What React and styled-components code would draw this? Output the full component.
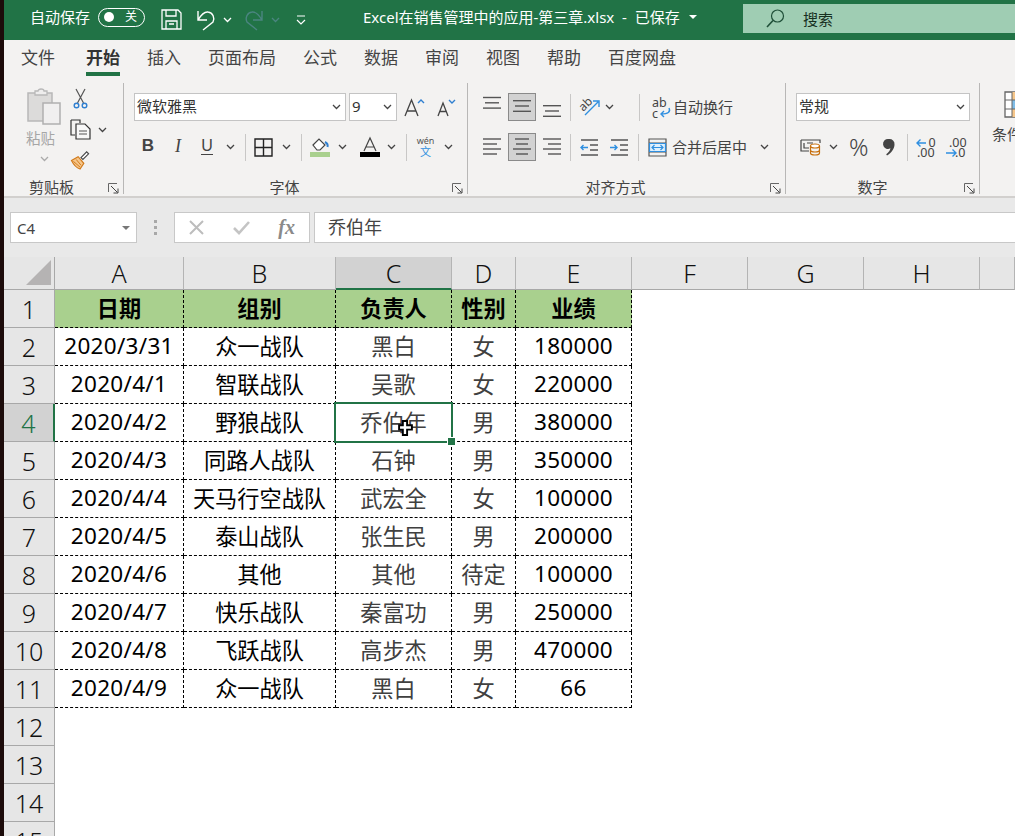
import React from "react";
import styled, { createGlobalStyle } from "styled-components";

const SANS = `"Noto Sans", "Noto Sans CJK SC", sans-serif`;

const GlobalStyle = createGlobalStyle`
  html, body {
    margin: 0;
    padding: 0;
    height: 836px;
    overflow: hidden;
    background: #ffffff;
  }
  * { box-sizing: border-box; }
  svg { display: block; overflow: visible; }
`;

const rows = [
  ["2020/3/31", "众一战队", "黑白", "女", "180000"],
  ["2020/4/1", "智联战队", "吴歌", "女", "220000"],
  ["2020/4/2", "野狼战队", "乔伯年", "男", "380000"],
  ["2020/4/3", "同路人战队", "石钟", "男", "350000"],
  ["2020/4/4", "天马行空战队", "武宏全", "女", "100000"],
  ["2020/4/5", "泰山战队", "张生民", "男", "200000"],
  ["2020/4/6", "其他", "其他", "待定", "100000"],
  ["2020/4/7", "快乐战队", "秦富功", "男", "250000"],
  ["2020/4/8", "飞跃战队", "高步杰", "男", "470000"],
  ["2020/4/9", "众一战队", "黑白", "女", "66"],
];
const tabs = ["文件", "开始", "插入", "页面布局", "公式", "数据", "审阅", "视图", "帮助", "百度网盘"];
const columns = ["A", "B", "C", "D", "E", "F", "G", "H", ""];

const Chevron = ({ color = "#444" }) => (
  <svg width="9" height="6" viewBox="0 0 9 6" fill="none" stroke={color} strokeWidth="1.3">
    <path d="M1 1l3.5 3.5L8 1" />
  </svg>
);

const Launcher = () => (
  <svg width="11" height="11" viewBox="0 0 11 11" fill="none" stroke="#666" strokeWidth="1">
    <path d="M.5 9V.5H9" />
    <path d="M3 3l6.5 6.5M10 5.5V10H5.5" stroke="#444" />
  </svg>
);

const SaveIcon = () => (
  <svg width="21" height="21" viewBox="0 0 21 21" fill="none" stroke="#fff" strokeWidth="1.3">
    <path d="M1 1h16l3 3v16H1z" />
    <path d="M5 1v6h10V1M5 20v-8h11v8M8 15h5" />
  </svg>
);

const UndoIcon = () => (
  <svg width="20" height="20" viewBox="0 0 20 20" fill="none" stroke="#fff" strokeWidth="1.4">
    <path d="M1 1v9h9M1 10C4 5 7 1.500 11 2c5 .5 7 6 5 10L6 20" />
  </svg>
);

const RedoIcon = () => (
  <svg width="20" height="20" viewBox="0 0 20 20" fill="none" stroke="#4b8580" strokeWidth="1.4">
    <path d="M19 1v9h-9M19 10C16 5 13 1.500 9 2c-5 .5-7 6-5 10l10 8" />
  </svg>
);

const CustomizeIcon = () => (
  <svg width="10" height="10" viewBox="0 0 10 10" fill="none" stroke="#fff" strokeWidth="1.2">
    <path d="M1 1h8M1 5l4 4 4-4" />
  </svg>
);

const SearchIcon = () => (
  <svg width="19" height="19" viewBox="0 0 19 19" fill="none" stroke="#1f4f38" strokeWidth="1.2">
    <circle cx="11.5" cy="7" r="6" />
    <path d="M7 11.5L1 18" strokeWidth="1.6" />
  </svg>
);

const PasteIcon = () => (
  <svg width="36" height="38" viewBox="0 0 36 38" fill="none">
    <path d="M2 5h24v28H2z" fill="#dcdbda" stroke="#b8b8b8" strokeWidth="1.5" />
    <path d="M9 6V3h3a3 2 0 016 0h3v4H9z" fill="#eeeded" stroke="#b8b8b8" strokeWidth="1.3" />
    <path d="M17 15h17v21H17z" fill="#f0efef" stroke="#b0b0b0" strokeWidth="1.5" />
  </svg>
);

const CutIcon = () => (
  <svg width="15" height="21" viewBox="0 0 15 21" fill="none">
    <path d="M3 1l7.5 14M12 1L4.500 15" stroke="#555" strokeWidth="1.2" />
    <circle cx="3.5" cy="17.5" r="2.3" stroke="#2f7fd0" strokeWidth="1.4" />
    <circle cx="11.5" cy="17.5" r="2.3" stroke="#2f7fd0" strokeWidth="1.4" />
  </svg>
);

const CopyIcon = () => (
  <svg width="21" height="21" viewBox="0 0 21 21" fill="none" stroke="#333" strokeWidth="1.2">
    <path d="M1 1h9v3M5 16H1V1" />
    <path d="M6 5h9l5 5v10H6z" fill="#f8f8f8" />
    <path d="M9 12h8M9 15h8" stroke="#555" />
  </svg>
);

const BrushIcon = () => (
  <svg width="21" height="19" viewBox="0 0 21 20" fill="none">
    <path d="M1 11l7-4 6 7-4 6c-3-1-7-5-9-9z" fill="#f6c68a" stroke="#d0791a" strokeWidth="1.2" />
    <path d="M3 12l7 6M6 10l5 6" stroke="#d0791a" />
    <path d="M11 8l6-6 2 2-6 6z" fill="#fff" stroke="#444" strokeWidth="1.2" />
  </svg>
);

const BorderIcon = () => (
  <svg width="19" height="19" viewBox="0 0 19 19" fill="none" stroke="#222" strokeWidth="1.4">
    <path d="M1 1h17v17H1zM9.5 1v17M1 9.5h17" />
  </svg>
);

const FillIcon = () => (
  <svg width="20" height="20" viewBox="0 0 20 20" fill="none">
    <path d="M3 8l6-6 6 6-5 5H7z" fill="#fff" stroke="#444" strokeWidth="1.2" />
    <path d="M15 5c2 1 3 3 2.500 5" stroke="#2f7fd0" strokeWidth="2" />
    <path d="M0 15h20v5H0z" fill="#a9d08e" />
  </svg>
);

const FontColorIcon = () => (
  <svg width="20" height="20" viewBox="0 0 20 20" fill="none">
    <path d="M4 14L10 1l6 13M6 10h8" stroke="#444" strokeWidth="1.2" />
    <path d="M0 15h20v5H0z" fill="#000" />
  </svg>
);

const SizeIcon = ({ up, big }) => (
  <svg width="21" height="19" viewBox="0 0 21 19" fill="none">
    <path d={big ? "M1 18L7.500 2 14 18M3.500 13h8" : "M3 18L8 5l5 13M5 13.500h6"} stroke="#444" strokeWidth="1.3" />
    <path d={up ? "M14 5l3-3 3 3" : "M14 2l3 3 3-3"} stroke="#2f7fd0" strokeWidth="1.4" />
  </svg>
);

const AlignIcon = ({ lines, gap = 5, top = 3 }) => (
  <svg width="18" height="22" viewBox="0 0 18 22" fill="none" stroke="#555" strokeWidth="1.4">
    {lines.map(([x1, x2], i) => (
      <path key={i} d={`M${x1} ${top + i * gap}H${x2}`} />
    ))}
  </svg>
);

const OrientIcon = () => (
  <svg width="22" height="20" viewBox="0 0 22 20" fill="none">
    <path d="M6 18L19 5M14 4h6v6" stroke="#2f8fe0" strokeWidth="1.4" />
    <text x="0" y="11" fontSize="12" fill="#444" transform="rotate(-45 7 8)" fontFamily="Noto Sans">ab</text>
  </svg>
);

const IndentIcon = ({ right }) => (
  <svg width="18" height="19" viewBox="0 0 18 19" fill="none" stroke="#555" strokeWidth="1.4">
    <path d="M1 2h17M10 7h8M10 12h8M1 17h17" />
    <path d={right ? "M0 9.500h7M4.500 7L7 9.500 4.500 12" : "M8 9.500H1M3.500 7L1 9.500 3.500 12"} stroke="#2f8fe0" />
  </svg>
);

const WrapIcon = () => (
  <svg width="19" height="21" viewBox="0 0 19 21" fill="none">
    <text x="0" y="10" fontSize="12.500" fill="#444" fontFamily="Noto Sans">ab</text>
    <text x="0" y="21" fontSize="12.500" fill="#444" fontFamily="Noto Sans">c</text>
    <path d="M17 11c2 4-1 6-8 6M12 14l-3 3 3 3" stroke="#2f8fe0" strokeWidth="1.4" />
  </svg>
);

const MergeIcon = () => (
  <svg width="19" height="19" viewBox="0 0 19 19" fill="none">
    <path d="M1 1h17v17H1zM1 5h17M1 14h17" stroke="#555" strokeWidth="1.2" />
    <path d="M1.500 5.500h16v8h-16z" fill="#dff0fc" stroke="#2f8fe0" strokeWidth="1.200" />
    <path d="M4 9.500h11M6.500 7L4 9.500 6.500 12M12.500 7L15 9.500 12.500 12" stroke="#2f8fe0" strokeWidth="1.200" />
  </svg>
);

const AccountingIcon = () => (
  <svg width="21" height="17" viewBox="0 0 21 17" fill="none">
    <path d="M1 1h19v3M1 1v11h8" stroke="#444" strokeWidth="1.200" />
    <path d="M4 4v5h5M7 4h6" stroke="#444" strokeWidth="1.200" />
    <ellipse cx="15" cy="7" rx="4.500" ry="2" fill="#fff" stroke="#c8710f" strokeWidth="1.200" />
    <path d="M10.500 7v7c0 1 2 2 4.500 2s4.500-1 4.500-2V7M10.500 11c0 1 2 2 4.500 2s4.500-1 4.500-2" stroke="#c8710f" strokeWidth="1.200" />
  </svg>
);

const CommaIcon = () => (
  <svg width="11" height="17" viewBox="0 0 11 17" fill="#444">
    <path d="M5 0a5 5 0 015.500 5.500c0 4-3 8.500-7.500 11l-.8-1.200c2.600-2 4-4 4.200-6a5 5 0 11-1.400-9.300z" />
  </svg>
);

const DecimalIcon = ({ more }) => (
  <svg width="20" height="21" viewBox="0 0 20 21" fill="none">
    {more ? (
      <>
        <text x="12.500" y="10" fontSize="12.500" fill="#444" fontFamily="Noto Sans">0</text>
        <text x="1" y="20" fontSize="12.500" fill="#444" fontFamily="Noto Sans">.00</text>
        <path d="M10 6H1M4.500 2.500L1 6l3.500 3.500" stroke="#2f8fe0" strokeWidth="1.400" />
      </>
    ) : (
      <>
        <text x="3" y="10" fontSize="12.500" fill="#444" fontFamily="Noto Sans">.00</text>
        <text x="9" y="20" fontSize="12.500" fill="#444" fontFamily="Noto Sans">.0</text>
        <path d="M0 16h10M6.500 12.500L10 16l-3.500 3.500" stroke="#2f8fe0" strokeWidth="1.400" />
      </>
    )}
  </svg>
);

const CondIcon = () => (
  <svg width="36" height="27" viewBox="0 0 36 27" fill="none">
    <path d="M1 1h35v25H1z" fill="#fff" stroke="#666" strokeWidth="1.300" />
    <path d="M8 1h28v8H8zM8 18h28v8H8z" fill="#f6c68a" />
    <path d="M8 9h28v9H8z" fill="#7fbde8" />
    <path d="M8 1v25M1 9h35M1 18h35" stroke="#666" />
  </svg>
);

const CloseMark = () => (
  <svg width="15" height="15" viewBox="0 0 15 15" fill="none" stroke="#bdbdbd" strokeWidth="2">
    <path d="M1 1l13 13M14 1L1 14" />
  </svg>
);

const CheckMark = () => (
  <svg width="17" height="14" viewBox="0 0 17 14" fill="none" stroke="#c4c4c4" strokeWidth="2.600">
    <path d="M1 7l5 5L16 1" />
  </svg>
);

const CrossCursor = () => (
  <svg width="15" height="16" viewBox="0 0 14 15">
    <path d="M4.500 1h4v4h4.500v4h-4.500v5h-4V9H1V5h3.500z" fill="#fff" stroke="#000" strokeWidth="1.800" />
  </svg>
);

export default function App() {
  return (
    <>
      <GlobalStyle />
      <Desktop>
        <DesktopEdge />
        <Window>
          <TitleBar>
            <AutoSaveLabel>自动保存</AutoSaveLabel>
            <Toggle>
              <ToggleKnob />
              <ToggleText>关</ToggleText>
            </Toggle>
            <QuickTool $w={21} $ml={16}><SaveIcon /></QuickTool>
            <QuickTool $w={20} $ml={15}><UndoIcon /></QuickTool>
            <QuickTool $w={9} $ml={6}><Chevron color="#fff" /></QuickTool>
            <QuickTool $w={20} $ml={11}><RedoIcon /></QuickTool>
            <QuickTool $w={9} $ml={8}><Chevron color="#4b8580" /></QuickTool>
            <QuickTool $w={10} $ml={16}><CustomizeIcon /></QuickTool>
            <DocTitle>
              Excel在销售管理中的应用-第三章.xlsx&nbsp; - &nbsp;已保存
              <DocCaret />
            </DocTitle>
            <SearchBox>
              <SearchIcon />
              <SearchText>搜索</SearchText>
            </SearchBox>
          </TitleBar>

          <TabBar>
            {tabs.map((t) => (
              <Tab key={t} $active={t === "开始"} $first={t === "文件"}>{t}</Tab>
            ))}
          </TabBar>

          <Ribbon>
            <Group $w={120}>
              <ClipboardBody>
                <PasteColumn>
                  <PasteIcon />
                  <PasteLabel>粘贴</PasteLabel>
                  <Chevron color="#aaa" />
                </PasteColumn>
                <ClipboardTools>
                  <CutSlot><CutIcon /></CutSlot>
                  <CopyRow>
                    <CopyIcon />
                    <Chevron />
                  </CopyRow>
                  <BrushIcon />
                </ClipboardTools>
              </ClipboardBody>
              <GroupLabel $shift={-24}>剪贴板</GroupLabel>
              <LauncherSlot><Launcher /></LauncherSlot>
            </Group>

            <Group $w={344}>
              <ToolRows $left={10}>
                <ToolRow>
                  <Select $w={212}>
                    <SelectText>微软雅黑</SelectText>
                    <Chevron />
                  </Select>
                  <Select $w={48} $ml={3}>
                    <SelectText>9</SelectText>
                    <Chevron />
                  </Select>
                  <Tool $w={21} $ml={7}><SizeIcon up big /></Tool>
                  <Tool $w={21} $ml={10}><SizeIcon /></Tool>
                </ToolRow>
                <ToolRow>
                  <Tool $w={28}><BoldGlyph>B</BoldGlyph></Tool>
                  <Tool $w={28} $ml={2}><ItalicGlyph>I</ItalicGlyph></Tool>
                  <Tool $w={28} $ml={1}><UnderGlyph>U</UnderGlyph></Tool>
                  <Tool $w={12} $ml={3}><Chevron /></Tool>
                  <Divider $ml={9} />
                  <Tool $w={19} $ml={8}><BorderIcon /></Tool>
                  <Tool $w={12} $ml={7}><Chevron /></Tool>
                  <Divider $ml={9} />
                  <Tool $w={20} $ml={8}><FillIcon /></Tool>
                  <Tool $w={12} $ml={6}><Chevron /></Tool>
                  <Tool $w={20} $ml={12}><FontColorIcon /></Tool>
                  <Tool $w={12} $ml={5}><Chevron /></Tool>
                  <Divider $ml={9} />
                  <WenTool $ml={9}>
                    <WenTop>wén</WenTop>
                    <WenBottom>文</WenBottom>
                  </WenTool>
                  <Tool $w={12} $ml={7}><Chevron /></Tool>
                </ToolRow>
              </ToolRows>
              <GroupLabel $shift={-22}>字体</GroupLabel>
              <LauncherSlot><Launcher /></LauncherSlot>
            </Group>

            <Group $w={318}>
              <ToolRows $left={15}>
                <ToolRow>
                  <Tool $w={18}><AlignIcon lines={[[0, 18], [2, 16], [0, 18]]} gap={5.300} top={1.500} /></Tool>
                  <ActiveTool $ml={7}><AlignIcon lines={[[0, 18], [2, 16], [0, 18]]} gap={5.300} top={4.700} /></ActiveTool>
                  <Tool $w={18} $ml={7}><AlignIcon lines={[[0, 18], [2, 16], [0, 18]]} gap={5.300} top={9.700} /></Tool>
                  <Divider $ml={9} />
                  <Tool $w={22} $ml={8}><OrientIcon /></Tool>
                  <Tool $w={12} $ml={2}><Chevron /></Tool>
                  <Divider $ml={24} />
                  <Tool $w={19} $ml={12}><WrapIcon /></Tool>
                  <WideLabel $ml={2}>自动换行</WideLabel>
                </ToolRow>
                <ToolRow>
                  <Tool $w={18}><AlignIcon lines={[[0, 18], [0, 14], [0, 18], [0, 14]]} /></Tool>
                  <ActiveTool $ml={7}><AlignIcon lines={[[2, 16], [3, 15], [0, 18], [3, 15]]} /></ActiveTool>
                  <Tool $w={18} $ml={7}><AlignIcon lines={[[0, 18], [5, 18], [0, 18], [5, 18]]} /></Tool>
                  <Divider $ml={9} />
                  <Tool $w={18} $ml={9}><IndentIcon /></Tool>
                  <Tool $w={18} $ml={12}><IndentIcon right /></Tool>
                  <Divider $ml={10} />
                  <Tool $w={19} $ml={9}><MergeIcon /></Tool>
                  <WideLabel $ml={5}>合并后居中</WideLabel>
                  <Tool $w={12} $ml={11}><Chevron /></Tool>
                </ToolRow>
              </ToolRows>
              <GroupLabel $shift={-22}>对齐方式</GroupLabel>
              <LauncherSlot><Launcher /></LauncherSlot>
            </Group>

            <Group $w={194}>
              <ToolRows $left={10}>
                <ToolRow>
                  <Select $w={174}>
                    <SelectText>常规</SelectText>
                    <Chevron />
                  </Select>
                </ToolRow>
                <ToolRow>
                  <Tool $w={21} $ml={4}><AccountingIcon /></Tool>
                  <Tool $w={12} $ml={6}><Chevron /></Tool>
                  <Percent $ml={10}>%</Percent>
                  <Tool $w={11} $ml={15}><CommaIcon /></Tool>
                  <Divider $ml={12} />
                  <Tool $w={20} $ml={8}><DecimalIcon more /></Tool>
                  <Tool $w={20} $ml={10}><DecimalIcon /></Tool>
                </ToolRow>
              </ToolRows>
              <GroupLabel $shift={-20}>数字</GroupLabel>
              <LauncherSlot><Launcher /></LauncherSlot>
            </Group>

            <LastGroup>
              <CondSlot><CondIcon /></CondSlot>
              <WideLabel>条件格式</WideLabel>
            </LastGroup>
          </Ribbon>

          <FormulaBar>
            <NameBox>
              C4
              <NameCaret />
            </NameBox>
            <Grip>
              <GripDot />
              <GripDot />
              <GripDot />
            </Grip>
            <FormulaButtons>
              <CloseMark />
              <CheckMark />
              <FxGlyph>fx</FxGlyph>
            </FormulaButtons>
            <FormulaInput>乔伯年</FormulaInput>
          </FormulaBar>

          <Sheet>
            <Corner>
              <CornerMark />
            </Corner>
            {columns.map((c, i) => (
              <ColumnHead key={i} $selected={c === "C"}>{c}</ColumnHead>
            ))}

            <RowHead>1</RowHead>
            {["日期", "组别", "负责人", "性别", "业绩"].map((h) => (
              <HeadCell key={h}>{h}</HeadCell>
            ))}

            {rows.map((row, r) => (
              <React.Fragment key={r}>
                <RowHead $selected={r === 2}>{r + 2}</RowHead>
                {row.map((v, c) => (
                  <Cell key={c} $soft={c === 2 || c === 3} $numeric={c === 0 || c === 4}>
                    {v}
                    {r === 2 && c === 2 && (
                      <>
                        <Selection />
                        <CursorSlot><CrossCursor /></CursorSlot>
                      </>
                    )}
                  </Cell>
                ))}
              </React.Fragment>
            ))}

            {[12, 13, 14, 15].map((n) => (
              <RowHead key={n}>{n}</RowHead>
            ))}
          </Sheet>
        </Window>
      </Desktop>
    </>
  );
}

const Desktop = styled.div`
  display: flex;
  width: 1015px;
  height: 836px;
  overflow: hidden;
  font-family: ${SANS};
`;

const DesktopEdge = styled.div`
  width: 4px;
  flex: none;
  background: #1c0b0a;
`;

const Window = styled.div`
  flex: 1;
  min-width: 0;
  display: flex;
  flex-direction: column;
`;

const TitleBar = styled.div`
  height: 40px;
  flex: none;
  display: flex;
  align-items: center;
  padding-left: 26px;
  background: #217346;
  color: #ffffff;
`;

const AutoSaveLabel = styled.span`
  font-size: 15px;
  width: 60px;
  white-space: nowrap;
  margin-top: -8px;
`;

const Toggle = styled.div`
  width: 47px;
  height: 19px;
  margin-left: 8px;
  margin-top: -6px;
  border: 1.3px solid #ffffff;
  border-radius: 10px;
  display: flex;
  align-items: center;
  justify-content: space-between;
  padding: 0 7px 0 5px;
`;

const ToggleKnob = styled.span`
  width: 10px;
  height: 10px;
  border-radius: 50%;
  background: #ffffff;
`;

const ToggleText = styled.span`
  font-size: 12px;
  line-height: 1;
`;

const QuickTool = styled.div`
  width: ${(p) => p.$w}px;
  margin-left: ${(p) => p.$ml}px;
  margin-top: -1px;
  display: flex;
  justify-content: center;
  flex: none;
`;

const DocTitle = styled.div`
  margin-left: 57px;
  margin-top: -8px;
  font-size: 15px;
  white-space: nowrap;
  display: flex;
  align-items: center;
  width: 380px;
`;

const DocCaret = styled.span`
  margin-left: 9px;
  margin-top: 2px;
  border-left: 4px solid transparent;
  border-right: 4px solid transparent;
  border-top: 4px solid #ffffff;
`;

const SearchBox = styled.div`
  flex: 1;
  height: 29px;
  margin-top: -3px;
  background: #9fcdb3;
  display: flex;
  align-items: center;
  padding-left: 23px;
  gap: 18px;
  color: #17301f;
`;

const SearchText = styled.span`
  font-size: 15px;
`;

const TabBar = styled.div`
  height: 40px;
  flex: none;
  background: #f3f2f1;
  display: flex;
  align-items: flex-start;
  padding: 6px 0 0 17px;
  gap: 27px;
`;

const Tab = styled.div`
  font-size: 17px;
  line-height: 24px;
  height: 30px;
  white-space: nowrap;
  margin-right: ${(p) => (p.$first ? "4px" : "0")};
  color: ${(p) => (p.$active ? "#333333" : "#444444")};
  font-weight: ${(p) => (p.$active ? 700 : 400)};
  border-bottom: ${(p) => (p.$active ? "4px solid #217346" : "none")};
`;

const Ribbon = styled.div`
  height: 118px;
  flex: none;
  display: flex;
  background: #f3f2f1;
  padding-top: 3px;
  border-bottom: 2px solid #d2d0ce;
`;

const Group = styled.div`
  position: relative;
  width: ${(p) => p.$w}px;
  flex: none;
  height: 111px;
  border-right: 1px solid #b8b7b6;
  display: flex;
  flex-direction: column;
`;

const LastGroup = styled.div`
  flex: 1;
  min-width: 0;
  display: flex;
  flex-direction: column;
  padding: 8px 0 0 12px;
  gap: 7px;
  overflow: hidden;
`;

const CondSlot = styled.div`
  margin-left: 12px;
`;

const ClipboardBody = styled.div`
  height: 93px;
  display: flex;
  padding: 5px 0 0 22px;
`;

const PasteColumn = styled.div`
  width: 36px;
  display: flex;
  flex-direction: column;
  align-items: center;
`;

const PasteLabel = styled.span`
  font-size: 14.500px;
  line-height: 22px;
  margin: 1px 0 7px -7px;
  color: #a6a6a6;
`;

const ClipboardTools = styled.div`
  margin-left: 8px;
  display: flex;
  flex-direction: column;
  align-items: flex-start;
  gap: 10px;
`;

const CutSlot = styled.div`
  margin-left: 3px;
`;

const CopyRow = styled.div`
  display: flex;
  align-items: center;
  gap: 7px;
`;

const GroupLabel = styled.div`
  position: absolute;
  left: ${(p) => p.$shift}px;
  right: 0;
  bottom: -4px;
  text-align: center;
  font-size: 15px;
  line-height: 22px;
  color: #444444;
`;

const LauncherSlot = styled.div`
  position: absolute;
  right: 4px;
  bottom: 0;
  height: 11px;
`;

const ToolRows = styled.div`
  display: flex;
  flex-direction: column;
  gap: 12px;
  padding: 10px 0 0 ${(p) => p.$left}px;
`;

const ToolRow = styled.div`
  display: flex;
  align-items: center;
  height: 28px;
`;

const Tool = styled.div`
  width: ${(p) => p.$w}px;
  margin-left: ${(p) => p.$ml || 0}px;
  height: 28px;
  flex: none;
  display: flex;
  align-items: center;
  justify-content: center;
  color: #444444;
`;

const ActiveTool = styled(Tool)`
  width: 28px;
  background: #d2d2d2;
  border: 1px solid #8a8a8a;
`;

const Select = styled.div`
  width: ${(p) => p.$w}px;
  margin-left: ${(p) => p.$ml || 0}px;
  height: 28px;
  flex: none;
  background: #ffffff;
  border: 1px solid #c4c4c4;
  display: flex;
  align-items: center;
  justify-content: space-between;
  padding: 0 4px 0 2px;
`;

const SelectText = styled.span`
  font-size: 15px;
  line-height: 20px;
  margin-top: -2px;
  color: #333333;
`;

const Divider = styled.div`
  width: 1px;
  height: 27px;
  flex: none;
  margin-left: ${(p) => p.$ml || 0}px;
  background: #c8c7c6;
`;

const BoldGlyph = styled.span`
  font-family: "Liberation Sans", sans-serif;
  font-size: 17px;
  font-weight: 700;
  margin-top: -2px;
`;

const ItalicGlyph = styled.span`
  font-family: "Liberation Serif", serif;
  font-size: 18px;
  font-style: italic;
  margin-top: -2px;
`;

const UnderGlyph = styled.span`
  font-family: "Liberation Sans", sans-serif;
  font-size: 16px;
  line-height: 16px;
  margin-top: -2px;
  border-bottom: 1.500px solid #444444;
`;

const WenTool = styled.div`
  width: 19px;
  margin-left: ${(p) => p.$ml}px;
  flex: none;
  display: flex;
  flex-direction: column;
  align-items: center;
`;

const WenTop = styled.span`
  font-size: 9px;
  line-height: 10px;
  color: #555555;
`;

const WenBottom = styled.span`
  font-size: 11px;
  line-height: 12px;
  color: #2f8fe0;
`;

const WideLabel = styled.span`
  margin-left: ${(p) => p.$ml || 0}px;
  margin-top: -2px;
  font-size: 15px;
  white-space: nowrap;
  color: #444444;
`;

const Percent = styled.span`
  margin-left: ${(p) => p.$ml}px;
  width: 20px;
  flex: none;
  font-size: 24px;
  font-weight: 300;
  line-height: 28px;
  color: #444444;
`;

const FormulaBar = styled.div`
  height: 59px;
  flex: none;
  background: #e9e9e9;
  display: flex;
  align-items: flex-start;
  padding: 14px 0 0 6px;
`;

const NameBox = styled.div`
  width: 127px;
  height: 31px;
  background: #ffffff;
  border: 1px solid #c8c8c8;
  display: flex;
  align-items: center;
  justify-content: space-between;
  padding: 0 6px;
  font-size: 15px;
  color: #444444;
`;

const NameCaret = styled.span`
  border-left: 4px solid transparent;
  border-right: 4px solid transparent;
  border-top: 4px solid #777777;
`;

const Grip = styled.div`
  width: 37px;
  height: 31px;
  display: flex;
  flex-direction: column;
  align-items: center;
  justify-content: center;
  gap: 3px;
`;

const GripDot = styled.span`
  width: 3px;
  height: 3px;
  background: #a8a8a8;
`;

const FormulaButtons = styled.div`
  width: 136px;
  height: 31px;
  background: #ffffff;
  border: 1px solid #c8c8c8;
  display: flex;
  align-items: center;
  justify-content: space-between;
  padding: 0 14px;
`;

const FxGlyph = styled.span`
  font-family: "Liberation Serif", serif;
  font-style: italic;
  font-weight: 700;
  font-size: 20px;
  color: #8a8a8a;
`;

const FormulaInput = styled.div`
  flex: 1;
  height: 31px;
  margin-left: 4px;
  background: #ffffff;
  border: 1px solid #c8c8c8;
  border-right: none;
  display: flex;
  align-items: center;
  padding: 0 0 3px 13px;
  font-size: 18px;
  color: #444444;
`;

const Sheet = styled.div`
  flex: 1;
  min-height: 0;
  overflow: hidden;
  display: grid;
  grid-template-columns: 51px 129px 152px 116px 64px 116px 116px 116px 116px 1fr;
  grid-template-rows: 33px;
  grid-auto-rows: 38px;
  background: #ffffff;
`;

const Corner = styled.div`
  position: relative;
  background: #e6e6e6;
  border-right: 1px solid #a8a8a8;
  border-bottom: 1px solid #a8a8a8;
`;

const CornerMark = styled.span`
  position: absolute;
  right: 3px;
  bottom: 4px;
  width: 25px;
  height: 25px;
  background: #b5b3b3;
  clip-path: polygon(100% 0, 100% 100%, 0 100%);
`;

const ColumnHead = styled.div`
  background: ${(p) => (p.$selected ? "#d2d2d2" : "#e6e6e6")};
  border-right: 1px solid #b4b4b4;
  border-bottom: ${(p) => (p.$selected ? "2px solid #217346" : "1px solid #a8a8a8")};
  display: flex;
  align-items: center;
  justify-content: center;
  font-size: 25px;
  font-weight: 300;
  color: #111111;
`;

const RowHead = styled.div`
  grid-column: 1;
  background: ${(p) => (p.$selected ? "#d2d2d2" : "#e6e6e6")};
  border-right: ${(p) => (p.$selected ? "2px solid #217346" : "1px solid #a8a8a8")};
  border-bottom: 1px solid #a8a8a8;
  display: flex;
  align-items: center;
  justify-content: center;
  font-size: 25px;
  font-weight: 300;
  color: ${(p) => (p.$selected ? "#217346" : "#111111")};
`;

const Cell = styled.div`
  position: relative;
  background: #ffffff;
  border-right: 1px dashed #000000;
  border-bottom: 1px dashed #000000;
  display: flex;
  align-items: center;
  justify-content: center;
  padding-bottom: 3px;
  white-space: nowrap;
  font-size: ${(p) => (p.$numeric ? "22.5px" : "22.2px")};
  letter-spacing: ${(p) => (p.$numeric ? "0.3px" : "0")};
  color: ${(p) => (p.$soft ? "#404040" : "#000000")};
`;

const HeadCell = styled(Cell)`
  background: #a9d08e;
  font-weight: 700;
  color: #000000;
`;

const Selection = styled.span`
  position: absolute;
  z-index: 2;
  left: -2px;
  top: -2px;
  right: -2px;
  bottom: -2px;
  border: 2px solid #217346;

  &::after {
    content: "";
    position: absolute;
    right: -5px;
    bottom: -5px;
    width: 7px;
    height: 7px;
    background: #217346;
    border: 1px solid #ffffff;
  }
`;

const CursorSlot = styled.span`
  position: absolute;
  z-index: 3;
  left: 62px;
  top: 16px;
`;
